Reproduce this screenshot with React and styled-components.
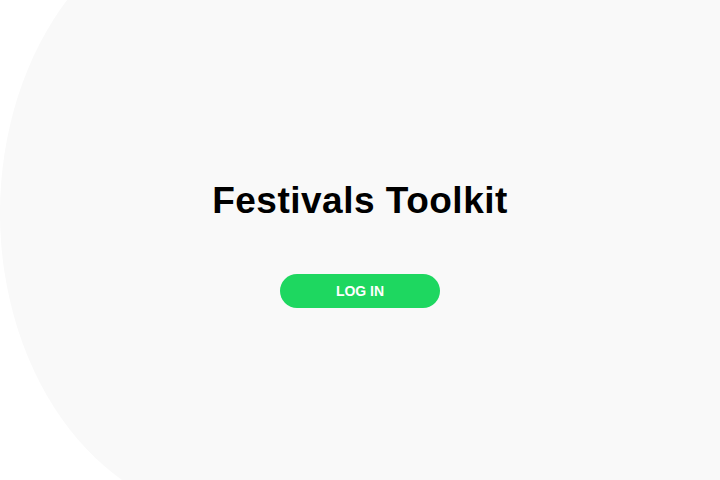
import styled, { createGlobalStyle } from "styled-components";

const GlobalStyle = createGlobalStyle`
  html, body {
    margin: 0;
    padding: 0;
    background: #ffffff;
    font-family: "Liberation Sans", Arial, sans-serif;
  }
`;

const Page = styled.main`
  position: relative;
  overflow: hidden;
  height: 480px;
  display: flex;
  flex-direction: column;
  align-items: center;
  justify-content: center;
  padding-top: 10px;
  box-sizing: border-box;
`;

// big soft grey shape behind everything
const Backdrop = styled.div`
  position: absolute;
  left: 0;
  top: -92px;
  width: 1000px;
  height: 610px;
  background: #f9f9f9;
  border-radius: 236px 0 0 236px / 305px 0 0 305px;
  z-index: 0;
`;

const Title = styled.h1`
  position: relative;
  z-index: 1;
  margin: 0;
  font-size: 37px;
  line-height: 1;
  font-weight: 700;
  color: #000;
  letter-spacing: 0.5px;
`;

const LoginButton = styled.button`
  position: relative;
  z-index: 1;
  margin-top: 55px;
  width: 160px;
  height: 34px;
  border: none;
  border-radius: 17px;
  background: #1ed760;
  color: #fff;
  font-family: inherit;
  font-size: 14px;
  font-weight: 700;
  cursor: pointer;
`;

export default function App() {
  return (
    <>
      <GlobalStyle />
      <Page>
        <Backdrop />
        <Title>Festivals Toolkit</Title>
        <LoginButton type="button">LOG IN</LoginButton>
      </Page>
    </>
  );
}
